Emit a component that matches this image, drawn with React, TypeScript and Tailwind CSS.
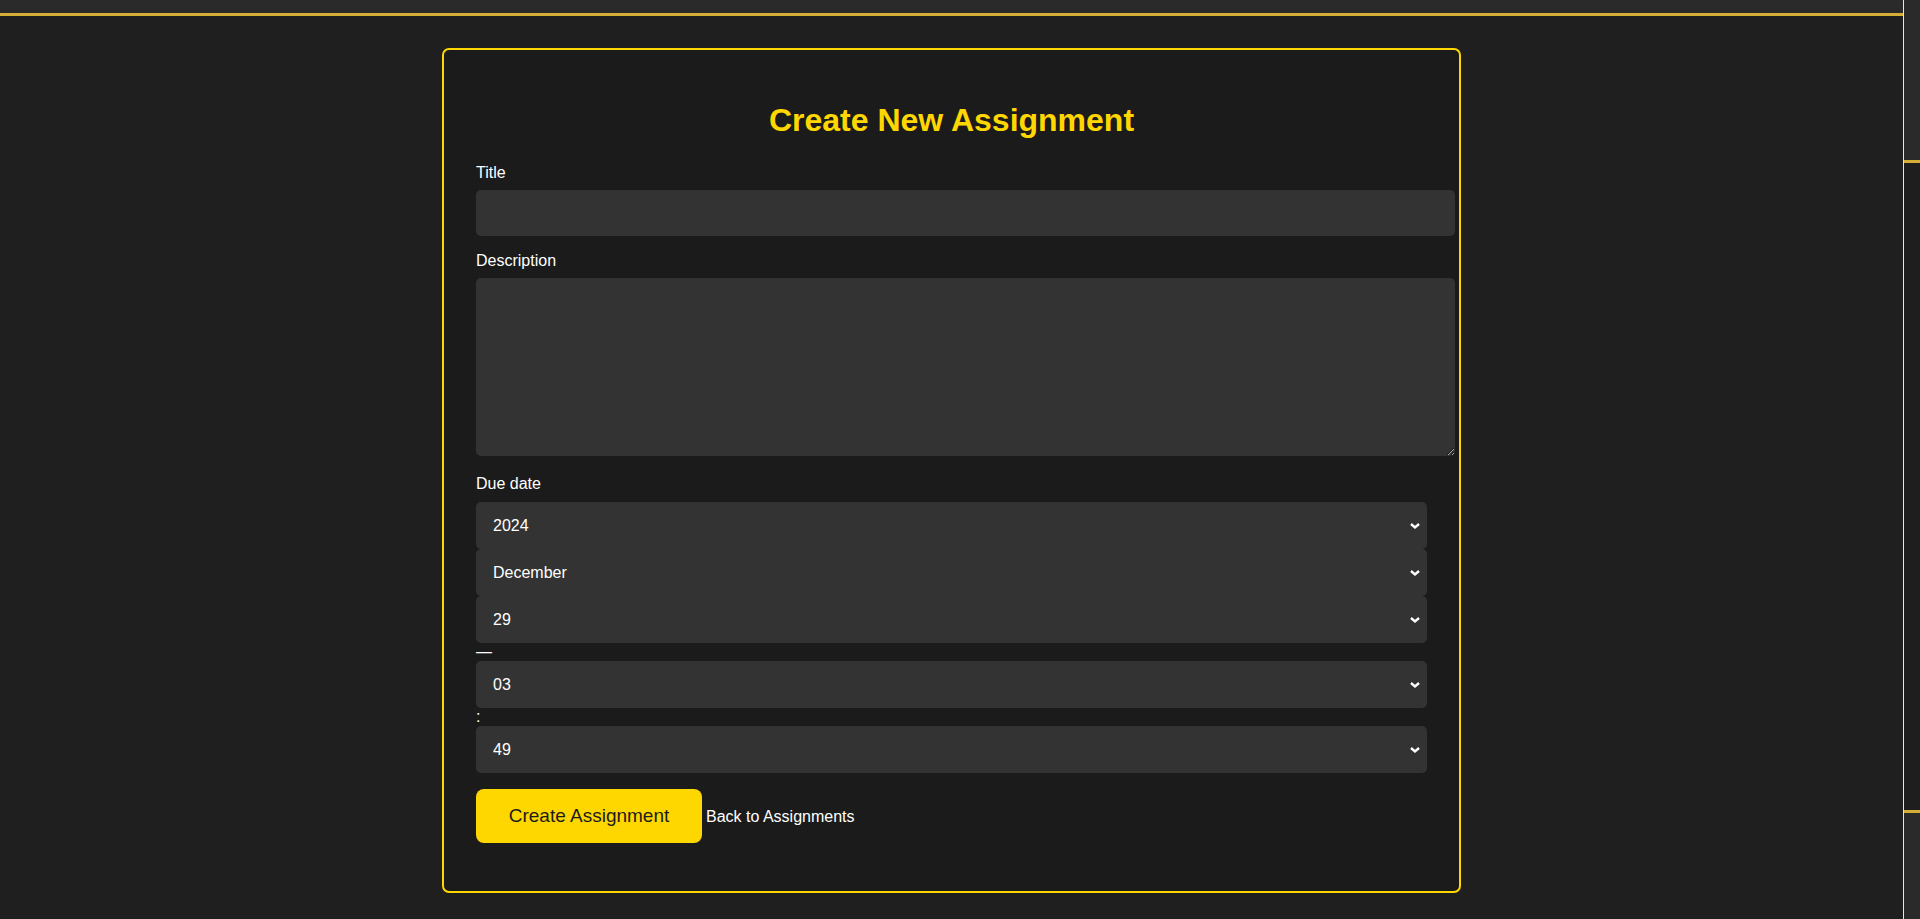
import React from "react"

function Chevron() {
  return (
    <svg
      className="pointer-events-none absolute right-[6px] top-1/2 -translate-y-1/2"
      width="12"
      height="8"
      viewBox="0 0 12 8"
      fill="none"
    >
      <path d="M2 2 L6 5.5 L10 2" stroke="#ffffff" strokeWidth="2.4" />
    </svg>
  )
}

function DateSelect({ value, options }: { value: string; options: string[] }) {
  return (
    <div className="relative h-[47px] w-full">
      <select
        defaultValue={value}
        className="h-full w-full appearance-none rounded-[5px] bg-[#333333] pl-[17px] pr-[30px] text-[16px] text-white outline-none"
      >
        {options.map((o) => (
          <option key={o} value={o}>
            {o}
          </option>
        ))}
      </select>
      <Chevron />
    </div>
  )
}

const months = [
  "January",
  "February",
  "March",
  "April",
  "May",
  "June",
  "July",
  "August",
  "September",
  "October",
  "November",
  "December",
]

export default function App() {
  return (
    <div className="flex h-[919px] w-full overflow-hidden bg-[#1f1f1f] font-['Liberation_Sans',Arial,sans-serif]">
      <div className="flex flex-1 flex-col">
        <div className="h-[16px] border-b-[3px] border-[#d4af37] bg-[#2a2a2a]" />
        <main className="pt-[32px]">
          <div className="mx-auto flex w-[1019px] flex-col rounded-[7px] border-2 border-[#ffd700] bg-[#1b1b1b] px-[32px] pt-[32px] pb-[48px]">
            <h2 className="mt-[20px] text-center text-[32px] font-bold leading-[37px] text-[#ffd700]">
              Create New Assignment
            </h2>

            <label className="mt-[25px] mb-[8px] text-[16px] leading-[18px] text-white">
              Title
            </label>
            <input
              type="text"
              className="h-[46px] w-[calc(100%+28px)] rounded-[5px] bg-[#333333] px-[14px] text-[16px] text-white outline-none"
            />

            <label className="mt-[16px] mb-[8px] text-[16px] leading-[18px] text-white">
              Description
            </label>
            <textarea className="block h-[178px] w-[calc(100%+28px)] rounded-[5px] bg-[#333333] px-[14px] py-[12px] text-[16px] text-white outline-none" />

            <label className="mt-[19px] mb-[9px] text-[16px] leading-[18px] text-white">
              Due date
            </label>
            <div className="flex flex-col">
              <DateSelect value="2024" options={["2023", "2024", "2025", "2026"]} />
              <DateSelect value="December" options={months} />
              <DateSelect
                value="29"
                options={Array.from({ length: 31 }, (_, i) => String(i + 1))}
              />
              <div className="h-[18px] text-[16px] leading-[18px] text-white">—</div>
              <DateSelect
                value="03"
                options={Array.from({ length: 24 }, (_, i) => String(i).padStart(2, "0"))}
              />
              <div className="h-[18px] text-[16px] leading-[18px] text-white">:</div>
              <DateSelect
                value="49"
                options={Array.from({ length: 60 }, (_, i) => String(i).padStart(2, "0"))}
              />
            </div>

            <div className="mt-[16px] flex items-center gap-[4px]">
              <button className="h-[54px] w-[226px] rounded-[8px] bg-[#ffd700] text-[19px] text-[#1c1c1c]">
                Create Assignment
              </button>
              <a href="#" className="pt-[1px] text-[16px] text-white">
                Back to Assignments
              </a>
            </div>
          </div>
        </main>
      </div>

      <div className="flex w-[17px] flex-col border-l border-[#e6e6e6] bg-[#2a2a2a]">
        <div className="h-[160px]" />
        <div className="h-[653px] border-y-[3px] border-[#d4af37] bg-[#1e1e1e]" />
      </div>
    </div>
  )
}
